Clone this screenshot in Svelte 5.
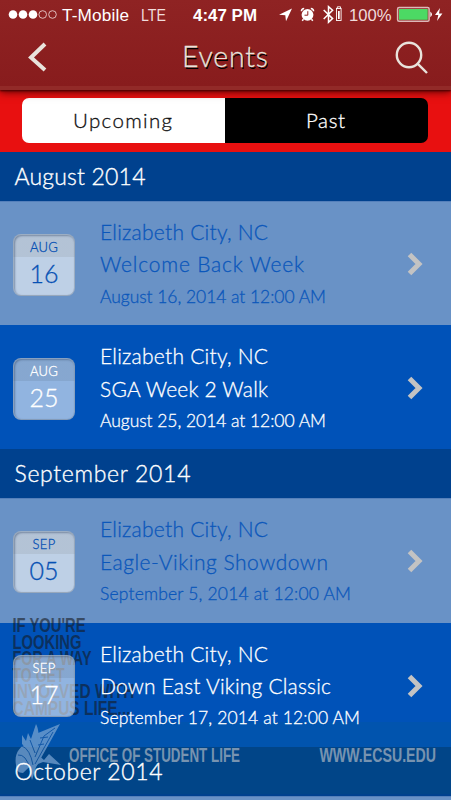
<div class="app">
  <header>
    <div class="status">
      <svg class="status-icons" viewBox="0 0 451 30">
        {#each [13, 23, 33] as cx}
          <circle {cx} cy="14.5" r="4.3" fill="#fff" />
        {/each}
        {#each [42.7, 52.5] as cx}
          <circle {cx} cy="14.5" r="3.8" class="ring" />
        {/each}
        <text x="62" y="20.5" textLength="67">T-Mobile</text>
        <text x="141" y="20.5" textLength="25" lengthAdjust="spacingAndGlyphs" class="thin">LTE</text>
        <text x="193" y="20.5" textLength="64" lengthAdjust="spacingAndGlyphs" class="bold">4:47 PM</text>
        <path d="M292 8.5L279 14.7L285.3 15.2L286 21.3Z" fill="#fff" />
        <circle cx="307.5" cy="14.8" r="5.9" fill="#fff" />
        <path d="M301.4 11.2A3 3 0 0 1 304.2 8.4M310.8 8.4A3 3 0 0 1 313.6 11.2M303.5 19.2L302.2 20.8M311.5 19.2L312.8 20.8" class="line" />
        <path d="M307.8 11.2V15.2H304.5" stroke="#8d2020" fill="none" />
        <path d="M323.7 10L332.6 18.6L328.5 22.4V6.6L332.6 10.2L323.7 19" class="line" />
        <path d="M337.3 8.5V6.8H340.5V8.5" class="line thin-line" />
        <rect x="336.5" y="8.5" width="4.6" height="12" class="line thin-line" />
        <rect x="338" y="11" width="1.7" height="8" fill="#fff" />
        <text x="349" y="20.5" textLength="42.5" lengthAdjust="spacingAndGlyphs" class="thin">100%</text>
        <rect x="397.6" y="7.6" width="31.5" height="13.6" rx="1.5" class="line battery" />
        <rect x="399" y="9" width="28.7" height="10.8" fill="#4cd964" />
        <path d="M430.3 11.5Q433.7 14.4 430.3 17.3Z" fill="#fff" />
        <path d="M440 8L435 15H438.3L437 21L442.4 13.5H439Z" fill="#fff" />
      </svg>
    </div>
    <nav>
      <svg class="back" viewBox="0 0 20 32"><path d="M17 2L3 15.5L17 28" /></svg>
      <h1><span use:fit={86}>Events</span></h1>
      <svg class="search" viewBox="0 0 34 34">
        <circle cx="14" cy="14" r="12.2" />
        <path d="M22.8 22.8L32 32" />
      </svg>
    </nav>
  </header>

  <div class="tabs">
    <button class:active={tab === 'upcoming'} on:click={() => tab = 'upcoming'}>
      <span use:fit={99}>Upcoming</span>
    </button>
    <button class:active={tab === 'past'} on:click={() => tab = 'past'}>
      <span use:fit={39}>Past</span>
    </button>
  </div>

  <main>
    {#each months as month}
      <section>
        <h2><span use:fit={month.width}>{month.name}</span></h2>
        {#each month.events as event, i}
          <article class:light={i % 2 === 0}>
            <div class="date">
              <span class="date-month">{event.month}</span>
              <span class="date-day">{event.day}</span>
            </div>
            <div class="info">
              <p><span use:fit={168}>Elizabeth City, NC</span></p>
              <p><span use:fit={event.titleWidth}>{event.title}</span></p>
              <p class="when"><span use:fit={event.whenWidth}>{event.when}</span></p>
            </div>
            <svg class="chevron" viewBox="0 0 16 24"><path d="M2.5 2.5L12 12L2.5 21.5" /></svg>
          </article>
        {/each}
      </section>
    {/each}
    <article class="light"></article>
  </main>

  <!-- poster showing through the list -->
  <svg class="poster" viewBox="0 0 451 190">
    <rect y="112" width="451" height="72" fill="#0c6a5a" opacity="0.1" />
    <g class="slogan">
      {#each slogan as line, i}
        <text x="12.5" y={22 + i * 16.6} textLength={line.width} lengthAdjust="spacingAndGlyphs">{line.text}</text>
      {/each}
    </g>
    <g class="eagle">
      <path d="M16 155C14 144 19 136 29 133L36 143L44 150L49 144L61 155L43 152L38 154L35 158C29 155 27 160 23 163C18 163 16 160 16 155Z" />
      <path d="M22 134L22 125L26 131L28 123L31 129L36 114C39 119 38 125 40 130L39 139L33 145L26 138Z" />
      <path d="M38 123L60 114L50 132L36 157L32 170L29 158L36 144Z" />
      <path class="feather" d="M22 136Q30 139 33 155M18 145Q26 144 30 159M30 130L35 143M55 118L44 126L35 147M53 122L35 154M40 128L48 127M38 135L44 134" />
    </g>
    <g class="footer">
      <text x="69" y="152" textLength="171" lengthAdjust="spacingAndGlyphs">OFFICE OF STUDENT LIFE</text>
      <text x="319.5" y="152" textLength="116.5" lengthAdjust="spacingAndGlyphs">WWW.ECSU.EDU</text>
    </g>
  </svg>
</div>

<script>
let tab = 'upcoming'

const months = [
  {
    name: 'August 2014',
    width: 131,
    events: [
      { month: 'AUG', day: '16', title: 'Welcome Back Week', titleWidth: 204, when: 'August 16, 2014 at 12:00 AM', whenWidth: 226 },
      { month: 'AUG', day: '25', title: 'SGA Week 2 Walk', titleWidth: 168, when: 'August 25, 2014 at 12:00 AM', whenWidth: 226 },
    ]
  },
  {
    name: 'September 2014',
    width: 176,
    events: [
      { month: 'SEP', day: '05', title: 'Eagle-Viking Showdown', titleWidth: 228, when: 'September 5, 2014 at 12:00 AM', whenWidth: 251 },
      { month: 'SEP', day: '17', title: 'Down East Viking Classic', titleWidth: 231, when: 'September 17, 2014 at 12:00 AM', whenWidth: 260 },
    ]
  },
  { name: 'October 2014', width: 148, events: [] }
]

const slogan = [
  { text: "IF YOU'RE", width: 73 },
  { text: 'LOOKING', width: 69 },
  { text: 'FOR A WAY', width: 79 },
  { text: 'TO GET', width: 52 },
  { text: 'INVOLVED WITH', width: 122 },
  { text: 'CAMPUS LIFE...', width: 118 },
]

// Track the letters out (or in) so the line takes the given width
function fit(node, width) {
  const gaps = node.textContent.length - 1
  node.style.letterSpacing = '0px'
  const spacing = (width - node.getBoundingClientRect().width) / gaps
  node.style.letterSpacing = `${spacing}px`
  node.style.marginRight = `${-spacing}px`
}
</script>

<style>
:global(body) {
  margin: 0;
}
.app {
  position: relative;
  height: 800px;
  overflow: hidden;
  font-family: Lato, 'Liberation Sans', sans-serif;
  font-weight: 300;
  color: #fff;
  background: #0052b8;
}
header {
  position: relative;
  z-index: 4;
  box-sizing: border-box;
  height: 90px;
  background: linear-gradient(#8f2323, #881c1d);
  border-bottom: 4px solid #922a28;
  box-shadow: 0 1px 2px #400, 0 2px 8px rgba(50, 0, 0, 0.8);
}
.status {
  height: 30px;
}
.status-icons {
  display: block;
  width: 451px;
  height: 30px;
  font: 17.2px 'Liberation Sans', sans-serif;
  fill: #fff;
}
.thin {
  fill: #f0dcdc;
}
.bold {
  font-weight: bold;
}
.ring {
  fill: none;
  stroke: #e9cccc;
  stroke-width: 0.9;
}
.line {
  fill: none;
  stroke: #fff;
  stroke-width: 1.5;
}
.thin-line {
  stroke-width: 0.9;
}
.battery {
  stroke: #ddb8b8;
}
nav {
  display: flex;
  justify-content: space-between;
  align-items: center;
  height: 56px;
  padding: 0 22px 0 28px;
}
nav svg {
  fill: none;
  stroke: #e9e3dc;
}
.back {
  width: 20px;
  height: 32px;
  stroke-width: 4;
}
.search {
  width: 34px;
  height: 34px;
  stroke-width: 2.4;
}
h1 {
  margin: 0 0 4px 7px;
  font-size: 28.5px;
  font-weight: 300;
  line-height: 36px;
  color: #e9e3dc;
  -webkit-text-stroke: 0.3px;
  text-shadow: 1px 1.5px 0 #000;
}
.tabs {
  display: flex;
  box-sizing: border-box;
  height: 62px;
  padding: 8px 23px 9px 22px;
  background: #e81010;
}
.tabs button {
  flex: 1;
  padding: 0 2px 2px 0;
  border: 0;
  border-radius: 0 7px 7px 0;
  font: 300 20.5px Lato, sans-serif;
  -webkit-text-stroke: 0.3px;
  color: #fff;
  background: #000;
}
.tabs button:first-child {
  border-radius: 7px 0 0 7px;
}
.tabs .active {
  color: #111;
  background: #fff;
}
h2 {
  height: 49px;
  margin: 0;
  padding-left: 14.5px;
  font-size: 23px;
  font-weight: 300;
  line-height: 49px;
  white-space: nowrap;
  color: #fff;
  -webkit-text-stroke: 0.35px;
  background: #00418e;
}
h2 span {
  position: relative;
  z-index: 2;
}
article {
  display: flex;
  box-sizing: border-box;
  height: 124.2px;
  padding: 0 28px 0 13px;
  white-space: nowrap;
  -webkit-text-stroke: 0.3px;
  background: #0052b8;
}
article.light {
  color: #0b57bb;
  background: #6992c6;
  box-shadow: inset 0 1px #5580bb;
}
.date,
.info,
.chevron {
  position: relative;
  z-index: 2;
}
.date {
  display: flex;
  flex-direction: column;
  align-items: center;
  box-sizing: border-box;
  width: 62px;
  height: 62px;
  margin-top: 32.5px;
  border: 1px solid rgba(130, 145, 165, 0.55);
  border-radius: 8px;
  background: linear-gradient(rgba(236, 232, 226, 0.57) 22px, rgba(255, 255, 255, 0.57) 22px);
  box-shadow: inset 1px 1px 2px rgba(60, 80, 110, 0.5);
}
.light .date {
  color: #0650b4;
}
.date-month {
  font-size: 13px;
  line-height: 25px;
  letter-spacing: 0.3px;
  height: 22px;
}
.date-day {
  font-size: 25px;
  line-height: 33px;
}
.info {
  margin-left: 25px;
  padding-top: 15px;
  flex: 1;
}
.info p {
  margin: 0;
  font-size: 21px;
  line-height: 32.4px;
}
.info .when {
  font-size: 17.5px;
  line-height: 31px;
}
.chevron {
  width: 16px;
  height: 24px;
  margin-top: 51px;
  fill: none;
  stroke: #c3c3c3;
  stroke-width: 5;
}
.poster {
  position: absolute;
  z-index: 1;
  top: 610px;
  left: 0;
  width: 451px;
  height: 190px;
  font: bold 21px 'Liberation Sans Narrow', 'Liberation Sans', sans-serif;
  pointer-events: none;
}
.slogan {
  fill: #15181c;
  opacity: 0.58;
}
.eagle {
  fill: #7da7d4;
  opacity: 0.7;
}
.feather {
  fill: none;
  stroke: #1c5ca8;
}
.footer {
  fill: #b6bec6;
  opacity: 0.65;
}
</style>
